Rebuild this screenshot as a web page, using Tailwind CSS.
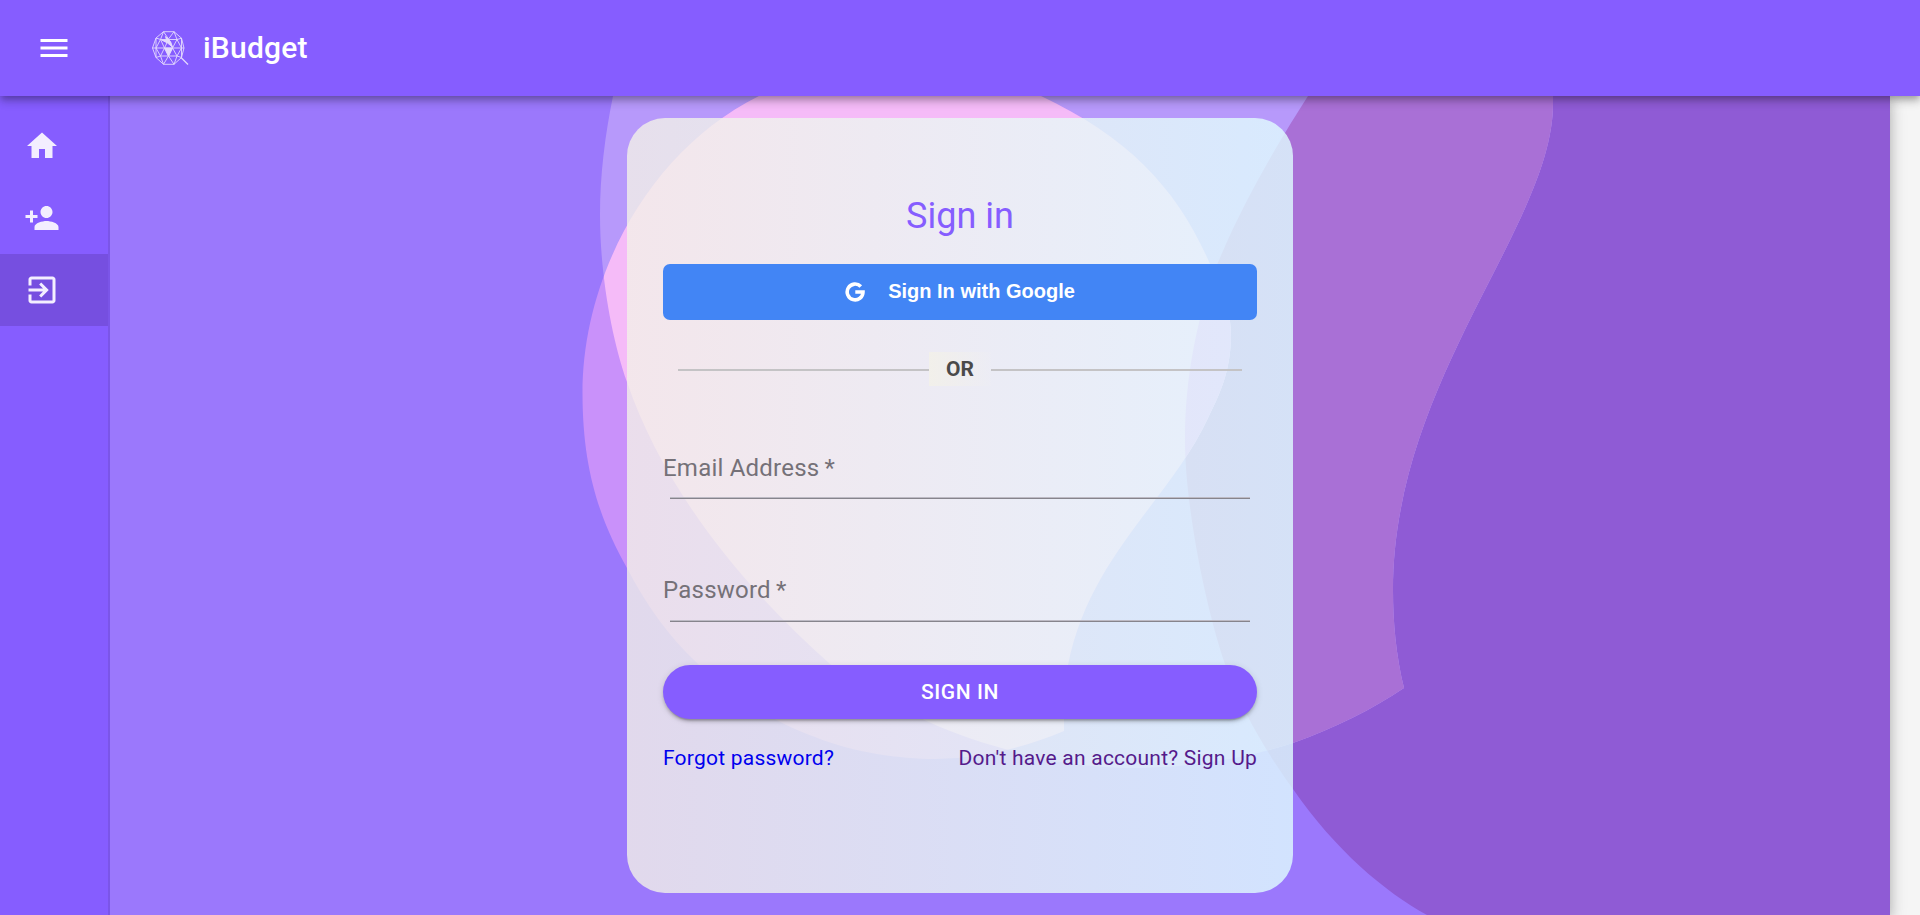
<!DOCTYPE html>
<html lang="en">
<head>
<meta charset="utf-8">
<title>iBudget</title>
<script src="https://cdn.jsdelivr.net/npm/@tailwindcss/browser@4"></script>
</head>
<body class="flex h-[915px] w-[1920px] flex-col overflow-hidden bg-[#f5f5f5] font-['Roboto',sans-serif]">
<header class="relative z-10 flex h-24 shrink-0 items-center bg-[#865dff] pl-9 text-white shadow-[0_3px_6px_-1.5px_rgba(0,0,0,0.2),0_6px_7.5px_0_rgba(0,0,0,0.14),0_1.5px_15px_0_rgba(0,0,0,0.12)]">
  <svg class="size-9" viewBox="0 0 24 24" fill="currentColor"><path d="M3 18h18v-2H3v2zm0-5h18v-2H3v2zm0-7v2h18V6H3z"/></svg>
  <svg class="ml-[78px] h-9 w-10" viewBox="0 0 40 36" fill="none" stroke="#e4dafd" stroke-width="0.900" stroke-linejoin="round">
    <path d="M13.500 1.700h10.500l7.500 6.500 2.500 9.800-2.500 9.500-7.500 6.800H13.500L6 27.500 2.500 18 6 8z"/>
    <path d="M13.500 1.700 18.500 9 24 1.700M6 8l4.500 1.500 3-7.800M31.500 8.200 27 9.500l-3-7.800M6 27.500l4.500-1.500 3 8.300M31.500 27.500 27 26l-3 8.300M13.500 34.300l5-8.300 5.500 8.300M2.500 18H34M6 8v19.500M31.500 8v19.500M10.500 9.500 6 18l4.500 8 4-8zM27 9.500l4.500 8.500L27 26l-4.500-8zM10.500 9.500H27M10.500 26H27M14.500 18l4-8.500 4 8.500-4 8z"/>
    <path d="M11.500 10h5L15.500 6.500l5 5 2 5.500-5-4zM14.500 18h8l-4 8z" fill="#e4dafd"/>
    <path d="m31 27.500 7 7" stroke-width="1.200"/>
  </svg>
  <div class="ml-[13px] text-[30px] leading-[48px] font-medium tracking-[0.0075em]">iBudget</div>
</header>
<div class="flex min-h-0 flex-1">
  <nav class="relative z-[1] flex w-[110px] shrink-0 flex-col border-r-2 border-[#7b55e8] bg-[#865dff] pt-[14px] text-[#f3eeff]">
    <a class="flex h-[72px] items-center pl-6"><svg class="size-9" viewBox="0 0 24 24" fill="currentColor"><path d="M10 20v-6h4v6h5v-8h3L12 3 2 12h3v8z"/></svg></a>
    <a class="flex h-[72px] items-center pl-6"><svg class="size-9" viewBox="0 0 24 24" fill="currentColor"><path d="M15 12c2.210 0 4-1.790 4-4s-1.790-4-4-4-4 1.790-4 4 1.790 4 4 4zm-9-2V7H4v3H1v2h3v3h2v-3h3v-2H6zm9 4c-2.670 0-8 1.340-8 4v2h16v-2c0-2.660-5.330-4-8-4z"/></svg></a>
    <a class="flex h-[72px] items-center bg-[#764fe0] pl-6"><svg class="size-9" viewBox="0 0 24 24" fill="currentColor"><path d="M10.090 15.590 11.500 17l5-5-5-5-1.410 1.410L12.670 11H3v2h9.670l-2.580 2.590zM19 3H5c-1.110 0-2 .9-2 2v4h2V5h14v14H5v-4H3v4c0 1.100.89 2 2 2h14c1.100 0 2-.9 2-2V5c0-1.100-.9-2-2-2z"/></svg></a>
  </nav>
  <main class="relative flex w-[1780px] shrink-0 bg-[#9b78fc] pt-[22px] pl-[517px] shadow-[0_3px_12px_rgba(0,0,0,0.2),0_6px_18px_rgba(0,0,0,0.14)]">
    <svg class="absolute inset-0 h-full w-full" viewBox="110 96 1780 819">
      <defs>
        <path id="wave" d="M1308 96C1285 132 1245 197 1217 265C1196 320 1185 380 1185 440C1185 505 1205 605 1225 664C1240 708 1268 755 1293 789C1335 850 1385 892 1427 915H1890V96Z"/>
        <path id="blob" d="M613 96C605 135 600 175 600 215C600 275 612 340 627 382C661 482 735 580 830 664C885 705 945 733 1005 749C1045 762 1090 768 1140 768C1195 767 1245 758 1293 743C1335 728 1373 709 1404 688C1396 655 1393 622 1393 590C1393 380 1553 225 1553 104V96Z"/>
        <path id="drop" d="M759 96C650 150 582.500 275 582.500 393C582.500 470 600 520 627 568C645 603 668 636 697 663C735 700 780 724 815 737C855 753 900 759 935 759C985 758 1025 747 1064 731V726C1064 706 1065 684 1068 665C1090 555 1170 500 1208 418C1222 390 1230 370 1231 338C1231 312 1224 286 1210 264C1178 190 1130 138 1041 96Z"/>
        <clipPath id="inBlob"><use href="#blob"/></clipPath>
        <clipPath id="inDrop"><use href="#drop"/></clipPath>
      </defs>
      <use href="#wave" fill="#8f5bd5"/>
      <use href="#blob" fill="#b799fb"/>
      <use href="#wave" fill="#a970d6" clip-path="url(#inBlob)"/>
      <use href="#drop" fill="#c991fa"/>
      <use href="#blob" fill="#f5bbf8" clip-path="url(#inDrop)"/>
      <g clip-path="url(#inDrop)"><use href="#wave" fill="#e090f5" clip-path="url(#inBlob)"/></g>
    </svg>
    <section class="relative flex h-[775px] w-[666px] flex-col rounded-[38px] bg-linear-to-r from-[#f3f1e8]/80 to-[#e0feff]/80 px-9 pt-[74px]">
      <h1 class="h-12 text-center text-[36px] leading-[48px] text-[#865dff]">Sign in</h1>
      <button class="mt-6 flex h-14 shrink-0 items-center justify-center rounded-[7px] bg-[#4285f5] font-['Liberation_Sans',sans-serif] text-[20px] font-bold text-white">
        <svg class="mr-[23px] size-5" viewBox="0 0 20 20" fill="none" stroke="currentColor" stroke-width="3.600"><path d="M15.800 4.500A7.900 7.900 0 1 0 18 10H10.300"/></svg>
        <span class="-mt-0.5">Sign In with Google</span>
      </button>
      <div class="mx-[15px] mt-8 flex h-[34px] items-center">
        <div class="mt-0.5 h-0.5 flex-1 bg-[#c4c3c5]"></div>
        <div class="h-[34px] w-[62px] bg-linear-to-r from-[#f3f1e8]/80 to-[#f3f1f2]/10 text-center text-[21px] leading-[34px] font-bold text-[#4a4a4a]">OR</div>
        <div class="mt-0.5 h-0.5 flex-1 bg-[#c4c3c5]"></div>
      </div>
      <label class="mt-16 h-[47px] text-[24px] leading-[36px] tracking-[0.00938em] text-[#757178]">Email Address <span class="-ml-px">*</span></label>
      <div class="mx-[7px] h-0.5 shrink-0 border-t border-[#bdbac4] bg-[#86848c]"></div>
      <label class="mt-[73px] h-12 text-[24px] leading-[36px] tracking-[0.00938em] text-[#757178]">Password <span class="-ml-px">*</span></label>
      <div class="mx-[7px] h-0.5 shrink-0 border-t border-[#bdbac4] bg-[#86848c]"></div>
      <button class="mt-[43px] h-[54px] shrink-0 rounded-full bg-[#865dff] pt-0.5 text-[21px] font-medium tracking-[0.02857em] text-white shadow-[0_4.5px_1.5px_-3px_rgba(0,0,0,0.2),0_3px_3px_0_rgba(0,0,0,0.14),0_1.5px_7.5px_0_rgba(0,0,0,0.12)]">SIGN IN</button>
      <div class="mt-6 flex justify-between text-[21px] leading-[30px] tracking-[0.01071em]">
        <a class="text-[#0000ee]">Forgot password?</a>
        <a class="text-[#551a8b]">Don't have an account? Sign Up</a>
      </div>
    </section>
  </main>
</div>
</body>
</html>
